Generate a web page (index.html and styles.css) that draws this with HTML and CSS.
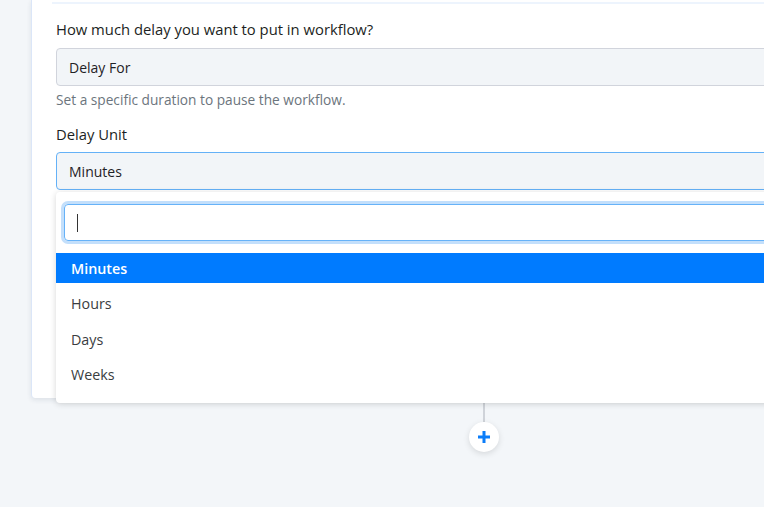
FILE: index.html
```html
<!DOCTYPE html>
<html>
<head>
<meta charset="utf-8">
<link rel="stylesheet" href="styles.css">
</head>
<body>
<div class="canvas">
  <div class="card">
    <div class="strip"></div>
    <div class="field-label first">How much delay you want to put in workflow?</div>
    <div class="input">Delay For</div>
    <div class="help">Set a specific duration to pause the workflow.</div>
    <div class="field-label second">Delay Unit</div>
    <div class="input select">Minutes</div>
    <div class="dropdown">
      <div class="search"><span class="caret"></span></div>
      <ul class="options">
        <li class="option active">Minutes</li>
        <li class="option">Hours</li>
        <li class="option">Days</li>
        <li class="option">Weeks</li>
      </ul>
    </div>
  </div>
  <div class="connector">
    <div class="line"></div>
    <div class="add">
      <svg width="14" height="14" viewBox="0 0 14 14"><path d="M7 1v12M1 7h12" stroke="#0b7df9" stroke-width="3" fill="none"/></svg>
    </div>
  </div>
</div>
</body>
</html>
```

FILE: styles.css
```css
html, body {
  margin: 0;
  padding: 0;
}
body {
  background: #f3f6f9;
  overflow: hidden;
  width: 764px;
  height: 507px;
  font-family: "Open Sans", "Lato", sans-serif;
  color: #212529;
}
.canvas {
  padding-left: 31px;
  width: 906px;
}
.card {
  position: relative;
  box-sizing: border-box;
  width: 906px;
  height: 398px;
  background: #fff;
  border-left: 1px solid #dbe6f8;
  border-radius: 0 0 4px 4px;
  box-shadow: 0 2px 5px rgba(30, 50, 80, 0.10);
  padding: 2px 0 0 24px;
}
.strip {
  margin-left: -4px;
  height: 2px;
  background: #edf4fd;
}
.field-label {
  font-size: 14.8px;
  line-height: 22px;
  color: #1c1f23;
}
.field-label.first { margin-top: 14px; }
.field-label.second { margin-top: 14px; }
.input {
  box-sizing: border-box;
  margin-top: 8px;
  height: 38px;
  border: 1px solid #d1d4dc;
  border-radius: 4px;
  background: #f2f5f8;
  padding-left: 12px;
  font-size: 14px;
  line-height: 37px;
  color: #1f2226;
}
.input.select {
  margin-top: 7px;
  border-color: #64b1f7;
}
.help {
  margin-top: 5px;
  font-size: 13.7px;
  line-height: 18px;
  color: #6c757d;
}
.dropdown {
  position: absolute;
  top: 192px;
  left: 24px;
  right: 0;
  background: #fff;
  border-radius: 4px;
  box-shadow: 0 1px 6px rgba(0, 0, 0, 0.16);
  padding: 12px 0 14px 0;
}
.search {
  box-sizing: border-box;
  margin: 0 0 0 8px;
  height: 37px;
  border: 1px solid #66b2f8;
  border-radius: 4px;
  box-shadow: 0 0 0 3px #c3dffb;
  display: flex;
  align-items: center;
  padding-left: 12px;
}
.caret {
  width: 1px;
  height: 18px;
  background: #333;
}
.options {
  list-style: none;
  margin: 12px 0 0 0;
  padding: 0;
  display: flex;
  flex-direction: column;
  gap: 5.4px;
}
.option {
  height: 30px;
  line-height: 31px;
  padding-left: 15px;
  font-size: 14.3px;
  color: #3a3d41;
}
.option.active {
  background: #007bff;
  color: #fff;
  font-weight: 600;
}
.connector {
  width: 906px;
  display: flex;
  flex-direction: column;
  align-items: center;
}
.line {
  width: 2px;
  height: 24px;
  background: #cfd3d9;
}
.add {
  width: 30px;
  height: 30px;
  border-radius: 50%;
  background: #fff;
  box-shadow: 0 2px 6px rgba(0, 0, 0, 0.12);
  display: flex;
  align-items: center;
  justify-content: center;
}
```
